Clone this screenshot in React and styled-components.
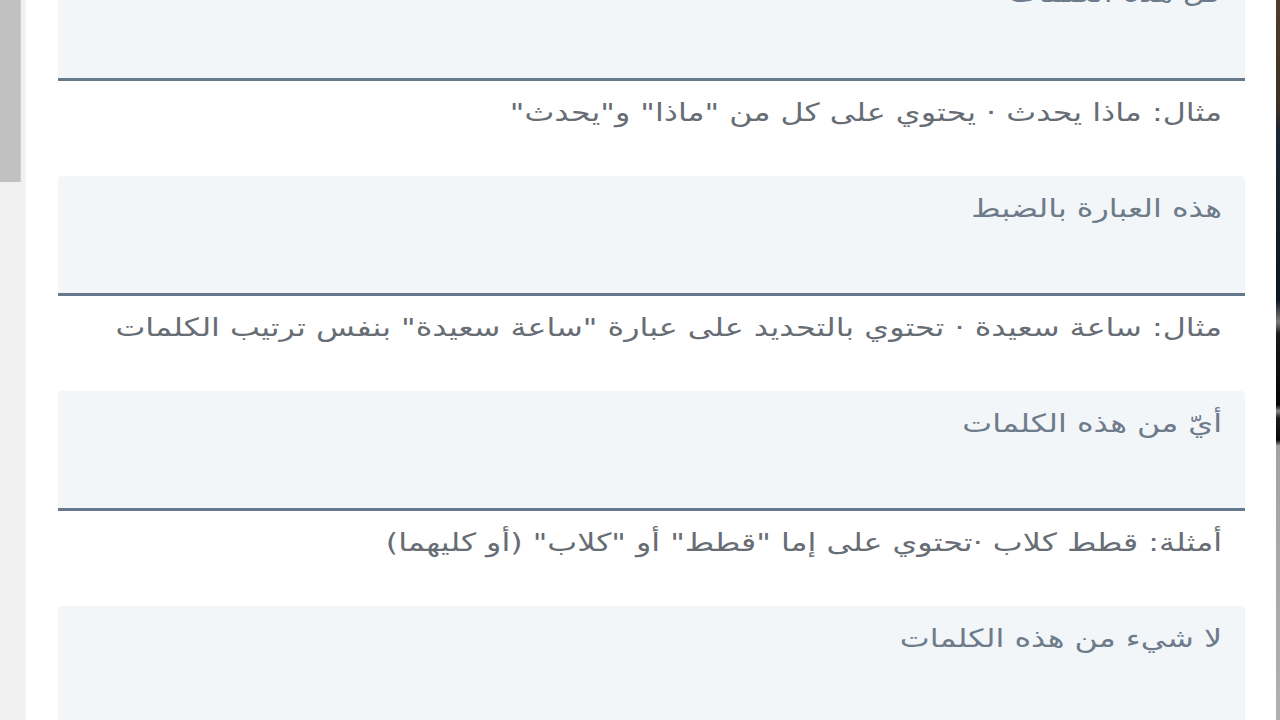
import React, { useLayoutEffect, useRef } from "react";
import styled, { createGlobalStyle } from "styled-components";

const Global = createGlobalStyle`
  html, body { margin: 0; padding: 0; height: 100%; overflow: hidden; background: #ffffff; }
  #root { height: 100%; }
`;

const Frame = styled.div`
  display: flex;
  height: 100vh;
  width: 100vw;
  background: #ffffff;
`;

const ScrollTrack = styled.div`
  width: 26px;
  flex: none;
  background: #f0f0f0;
  border-right: 1px solid #f6f6f6;
  box-sizing: border-box;
  display: flex;
  flex-direction: column;
`;

const ScrollThumb = styled.div`
  width: 21px;
  height: 182px;
  background: #c1c1c1;
  border-right: 1px solid #cdcdcd;
  box-sizing: border-box;
`;

const Scroller = styled.div`
  flex: 1;
  direction: rtl;
  overflow: hidden;
  background: #ffffff;
`;

const EdgeStrip = styled.div`
  width: 4px;
  flex: none;
  background: linear-gradient(
    to bottom,
    #4f3d2a 0px,
    #3b3024 110px,
    #1d2634 130px,
    #0d1520 300px,
    #7a7a7a 322px,
    #1a1a1a 334px,
    #050505 405px,
    #8a8a8a 411px,
    #1b1b1b 418px,
    #0a0a0a 440px,
    #a3a3a3 446px,
    #b0b0b0 720px
  );
`;

const Content = styled.div`
  padding: 0 31px 40px 32px;
  font-family: "DejaVu Sans", "Noto Sans", sans-serif;
`;

const FieldGroup = styled.div`
  display: flex;
  flex-direction: column;
`;

const Field = styled.div`
  height: 120px;
  box-sizing: border-box;
  background: #f3f6f9;
  border-bottom: 3px solid #66788b;
  border-radius: 4px 4px 0 0;
  padding: 18px 23px 0;
`;

const Text = styled.div`
  font-size: 25px;
  line-height: 30px;
  white-space: nowrap;
  transform: scaleX(1.27);
  transform-origin: right center;
`;

const Label = styled(Text)`
  color: #6d7b8a;
`;

const Help = styled.div`
  height: 95px;
  box-sizing: border-box;
  padding: 17px 23px 0;
`;

const HelpText = styled(Text)`
  color: #676d74;
`;

const fields = [
  { label: "كل هذه الكلمات", help: 'مثال: ماذا يحدث · يحتوي على كل من "ماذا" و"يحدث"' },
  { label: "هذه العبارة بالضبط", help: 'مثال: ساعة سعيدة · تحتوي بالتحديد على عبارة "ساعة سعيدة" بنفس ترتيب الكلمات' },
  { label: "أيّ من هذه الكلمات", help: 'أمثلة: قطط كلاب ·تحتوي على إما "قطط" أو "كلاب" (أو كليهما)' },
  { label: "لا شيء من هذه الكلمات", help: 'مثال: قطط كلاب · لا تحتوي على "قطط" ولا "كلاب"' },
  { label: "هذه الوسوم", help: "مثال: #ThrowbackThursday · تحتوي على الوسم" },
  { label: "من هذه الحسابات", help: "مثال: ‎@Twitter · أُرسلت من ‎@Twitter" },
];

export default function App() {
  const ref = useRef(null);
  useLayoutEffect(() => {
    if (ref.current) ref.current.scrollTop = 39;
  }, []);
  return (
    <>
      <Global />
      <Frame>
        <ScrollTrack>
          <ScrollThumb />
        </ScrollTrack>
        <Scroller ref={ref}>
          <Content>
            {fields.map((f, i) => (
              <FieldGroup key={i}>
                <Field>
                  <Label>{f.label}</Label>
                </Field>
                <Help>
                  <HelpText>{f.help}</HelpText>
                </Help>
              </FieldGroup>
            ))}
          </Content>
        </Scroller>
        <EdgeStrip />
      </Frame>
    </>
  );
}
